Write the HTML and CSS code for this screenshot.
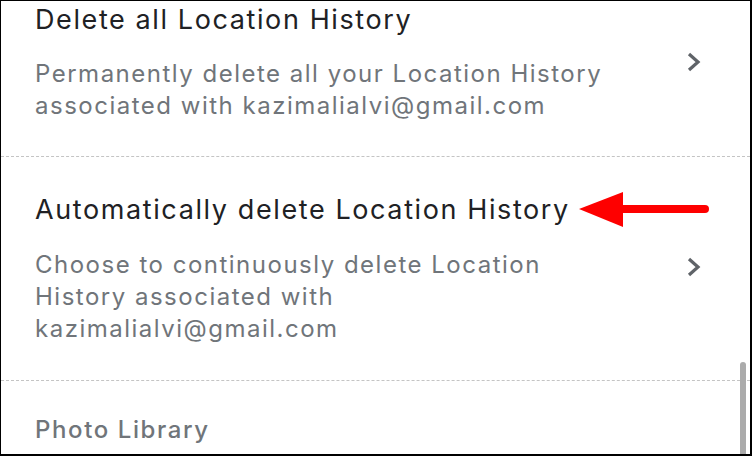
FILE: index.html
```html
<!DOCTYPE html>
<html>
<head>
<meta charset="utf-8">
<link rel="stylesheet" href="styles.css">
</head>
<body>
<div class="screen">
  <div class="list">
    <div class="item first">
      <div class="text">
        <div class="title">Delete all Location History</div>
        <div class="sub">Permanently delete all your Location History associated with kazimalialvi@gmail.com</div>
      </div>
      <svg class="chev" width="16" height="22" viewBox="0 0 16 22"><path d="M3 3 L12 11 L3 19" fill="none" stroke="#5f6368" stroke-width="3.2"/></svg>
    </div>
    <div class="item second">
      <div class="text">
        <div class="title-row">
          <span class="title">Automatically delete Location History</span>
          <svg class="arrow" width="132" height="38" viewBox="0 0 132 38"><polygon points="0,17 44,0 44,35" fill="#fe0000"/><line x1="42" y1="17" x2="126" y2="17" stroke="#fe0000" stroke-width="8" stroke-linecap="round"/></svg>
        </div>
        <div class="sub">Choose to continuously delete Location History associated with kazimalialvi@gmail.com</div>
      </div>
      <svg class="chev" width="16" height="22" viewBox="0 0 16 22"><path d="M3 3 L12 11 L3 19" fill="none" stroke="#5f6368" stroke-width="3.2"/></svg>
    </div>
    <div class="section">Photo Library</div>
  </div>
  <div class="scrollbar"></div>
</div>
</body>
</html>
```
FILE: styles.css
```css
html, body { margin: 0; padding: 0; }
body { width: 752px; height: 456px; overflow: hidden; background: #fff; font-family: Inter, "Liberation Sans", sans-serif; }
.screen { position: relative; box-sizing: border-box; width: 752px; height: 456px; border-style: solid; border-color: #000; border-width: 1px 2px 2px 1px; overflow: hidden; background: #fff; }
.list { display: flex; flex-direction: column; }
.item { display: flex; border-bottom: 1px dashed #c4c4c4; padding-left: 34px; padding-right: 48px; align-items: flex-start; }
.item.first { height: 155px; }
.item.first .text { margin-top: 2px; }
.item.first .chev { margin-top: 50px; }
.item.second { height: 223px; }
.item.second .text { margin-top: 33px; }
.item.second .sub { margin-top: 19px; }
.item.second .chev { margin-top: 99px; }
.text { flex: 1; min-width: 0; }
.title { font-size: 27px; line-height: 34px; letter-spacing: 1.6px; color: #202124; white-space: nowrap; }
.title-row { display: flex; align-items: center; }
.arrow { margin-left: 9px; margin-top: 2px; flex: none; }
.sub { font-size: 24px; line-height: 32px; letter-spacing: 1.5px; color: #70757a; margin-top: 21px; width: 590px; }
.chev { flex: none; margin-left: 20px; }
.section { padding: 33px 0 0 34px; font-size: 24px; line-height: 32px; letter-spacing: 1.6px; font-weight: 500; color: #70757a; }
.scrollbar { position: absolute; right: 4px; top: 361px; width: 6px; height: 100px; background: #ababab; border-radius: 3px 3px 0 0; }
```
